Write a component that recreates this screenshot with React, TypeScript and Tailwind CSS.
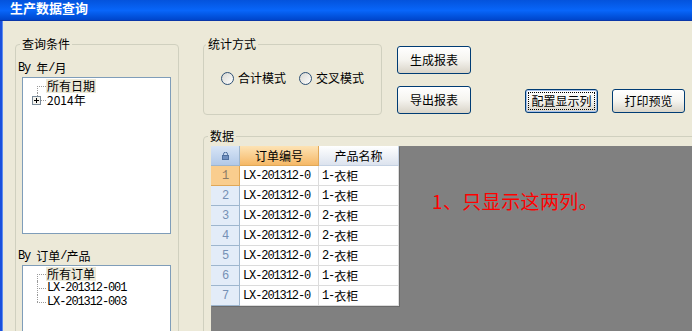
import React from 'react'

const cjk = "font-['Noto_Sans_CJK_SC',sans-serif]"
const mono = "font-['Liberation_Mono','Noto_Sans_CJK_SC',monospace] text-[12px] tracking-[-1.1px] whitespace-pre"

type Pos = 'first' | 'mid' | 'last'

function PlusBox() {
  return (
    <svg className="absolute left-[9px] top-[3px]" width="9" height="9" viewBox="0 0 9 9">
      <rect x="0.5" y="0.5" width="8" height="8" fill="#f4f3ee" stroke="#7a8a99" />
      <path d="M2 4.5h5M4.5 2v5" stroke="#000" />
    </svg>
  )
}

function TreeRow({ label, pos, plus, selected, code }: { label: string; pos: Pos; plus?: boolean; selected?: boolean; code?: boolean }) {
  const vert =
    pos === 'first' ? 'top-[7px] bottom-0' : pos === 'last' ? 'top-0 h-[7px]' : 'top-0 bottom-0'
  return (
    <div className="flex h-[14px] items-center">
      <div className="relative h-full w-[23px] shrink-0">
        <span className={`absolute left-[14px] w-0 border-l border-dotted border-[#9a9a9a] ${vert}`} />
        <span className="absolute left-[14px] top-[7px] w-[9px] border-t border-dotted border-[#9a9a9a]" />
        {plus && <PlusBox />}
      </div>
      <span className={`px-[1px] leading-[14px] ${selected ? 'bg-[#ece9d8]' : ''} ${code ? mono : ''}`}>{label}</span>
    </div>
  )
}

function Btn({ label, focused, className }: { label: string; focused?: boolean; className: string }) {
  return (
    <button
      className={`flex items-center justify-center rounded-[3px] border border-[#003c74] bg-linear-to-b from-white via-[#f5f4ef] to-[#d9d4c8] text-[12px] leading-[14px] text-black ${
        focused ? 'p-[2px] shadow-[inset_0_0_0_1px_#a6c1ec]' : ''
      } ${className}`}
    >
      {focused ? (
        <span className="flex h-full flex-1 items-center justify-center border border-dotted border-black">{label}</span>
      ) : (
        label
      )}
    </button>
  )
}

function Radio({ label }: { label: string }) {
  return (
    <label className="flex items-center gap-[4px]">
      <span className="h-[13px] w-[13px] rounded-full border border-[#2c4f74] bg-linear-to-br from-[#d8d8d2] to-white" />
      <span className="leading-[14px]">{label}</span>
    </label>
  )
}

function Lock() {
  return (
    <svg width="7" height="8" viewBox="0 0 7 8">
      <path d="M1.5 3.5V2.2a2 2 0 0 1 4 0v1.3" fill="none" stroke="#4d6f9f" />
      <rect x="0.5" y="3.5" width="6" height="4" fill="#6f8fbf" stroke="#4d6f9f" />
    </svg>
  )
}

const orders = ['1-衣柜', '1-衣柜', '2-衣柜', '2-衣柜', '2-衣柜', '1-衣柜', '1-衣柜']

export default function App() {
  return (
    <div className={`flex h-[331px] w-[692px] flex-col overflow-hidden bg-[#ece9d8] text-[12px] text-black ${cjk}`}>
      {/* title bar */}
      <div className="flex h-[21px] shrink-0 items-start bg-linear-to-b from-[#0453dc] via-[#0866fa] to-[#0042c6] pl-[10px] pt-[1px] shadow-[inset_0_-1px_0_#0a36a8]">
        <span className="text-[13px] font-bold leading-[14px] text-white">生产数据查询</span>
      </div>

      <div className="flex flex-1">
        <div className="w-[3px] shrink-0 bg-[#1a50dc] shadow-[inset_-1px_0_0_#5c8cf0]" />

        <div className="flex flex-1 pt-[16px]">
          {/* 查询条件 */}
          <fieldset className="ml-[12px] h-[320px] w-[164px] shrink-0 rounded-[4px] border border-[#d0d0bf] pl-[2px]">
            <legend className="ml-[2px] px-[2px] leading-[14px]">查询条件</legend>
            <div className="mt-[10px] flex h-[14px] items-center">
              <span className={mono}>By </span>
              <span>年</span>
              <span className={mono}>/</span>
              <span>月</span>
            </div>
            <div className="ml-[4px] mt-[2px] h-[157px] w-[149px] border border-[#7f9db9] bg-white pt-[1px]">
              <TreeRow label="所有日期" pos="first" selected />
              <TreeRow label="2014年" pos="last" plus />
            </div>
            <div className="mt-[15px] flex h-[14px] items-center">
              <span className={mono}>By </span>
              <span>订单</span>
              <span className={mono}>/</span>
              <span>产品</span>
            </div>
            <div className="ml-[4px] mt-[2px] h-[80px] w-[149px] border border-[#7f9db9] bg-white pt-[1px]">
              <TreeRow label="所有订单" pos="first" selected />
              <TreeRow label="LX-201312-001" pos="mid" code />
              <TreeRow label="LX-201312-003" pos="last" code />
            </div>
          </fieldset>

          <div className="ml-[24px] flex w-[500px] shrink-0 flex-col">
            <div className="flex items-start">
              {/* 统计方式 */}
              <fieldset className="h-[78px] w-[179px] shrink-0 rounded-[4px] border border-[#d0d0bf]">
                <legend className="ml-[2px] px-[2px] leading-[14px]">统计方式</legend>
                <div className="ml-[17px] mt-[20px] flex items-center gap-[13px]">
                  <Radio label="合计模式" />
                  <Radio label="交叉模式" />
                </div>
              </fieldset>

              <div className="ml-[15px] mt-[9px] flex flex-col gap-[12px]">
                <Btn label="生成报表" className="h-[28px] w-[74px]" />
                <Btn label="导出报表" className="h-[28px] w-[74px]" />
              </div>

              <div className="ml-[54px] mt-[52px] flex gap-[14px]">
                <Btn label="配置显示列" focused className="h-[24px] w-[73px]" />
                <Btn label="打印预览" className="h-[24px] w-[73px]" />
              </div>
            </div>

            {/* 数据 */}
            <fieldset className="mt-[14px] h-[220px] w-[500px] rounded-[4px] border border-[#d0d0bf]">
              <legend className="ml-[4px] px-[2px] leading-[14px]">数据</legend>
              <div className="ml-[7px] mt-[3px] flex h-[200px] items-start bg-[#808080]">
                <div className="flex flex-col bg-white shadow-[1px_1px_0_#6a6a6a]">
                  <div className="flex h-[20px]">
                    <div className="flex w-[29px] items-center justify-center border-r border-b border-[#9eb6ce] bg-linear-to-b from-[#d8e5f6] to-[#b2c9e8]">
                      <Lock />
                    </div>
                    <div className="flex w-[79px] items-center justify-center border-r border-b border-[#e0a858] bg-linear-to-b from-[#fde3b4] to-[#f5b865] leading-[14px]">
                      订单编号
                    </div>
                    <div className="flex w-[80px] items-center justify-center border-r border-b border-[#c5d2e3] bg-linear-to-b from-white to-[#dce3ee] leading-[14px]">
                      产品名称
                    </div>
                  </div>
                  {orders.map((p, i) => (
                    <div key={i} className="flex h-[20px]">
                      <div
                        className={`flex w-[29px] items-center justify-center border-r border-b ${
                          i === 0 ? 'border-[#e0a858] bg-[#f9cd8e] text-[#8a7a66]' : 'border-[#9eb6ce] bg-[#e3ecf8] text-[#7590b5]'
                        } ${mono}`}
                      >
                        {i + 1}
                      </div>
                      <div className={`flex w-[79px] items-center border-r border-b border-[#dcdcdc] pl-[3px] ${mono}`}>
                        LX-201312-0
                      </div>
                      <div className="flex w-[80px] items-center border-r border-b border-[#dcdcdc] pl-[3px] leading-[14px]">
                        <span className={mono}>{p.slice(0, 2)}</span>
                        <span>{p.slice(2)}</span>
                      </div>
                    </div>
                  ))}
                </div>
                <div className="ml-[33px] mt-[43px] text-[19px] leading-[24px] tracking-[0.4px] text-[#ff0000]">
                  1、只显示这两列。
                </div>
              </div>
            </fieldset>
          </div>
        </div>
      </div>
    </div>
  )
}
